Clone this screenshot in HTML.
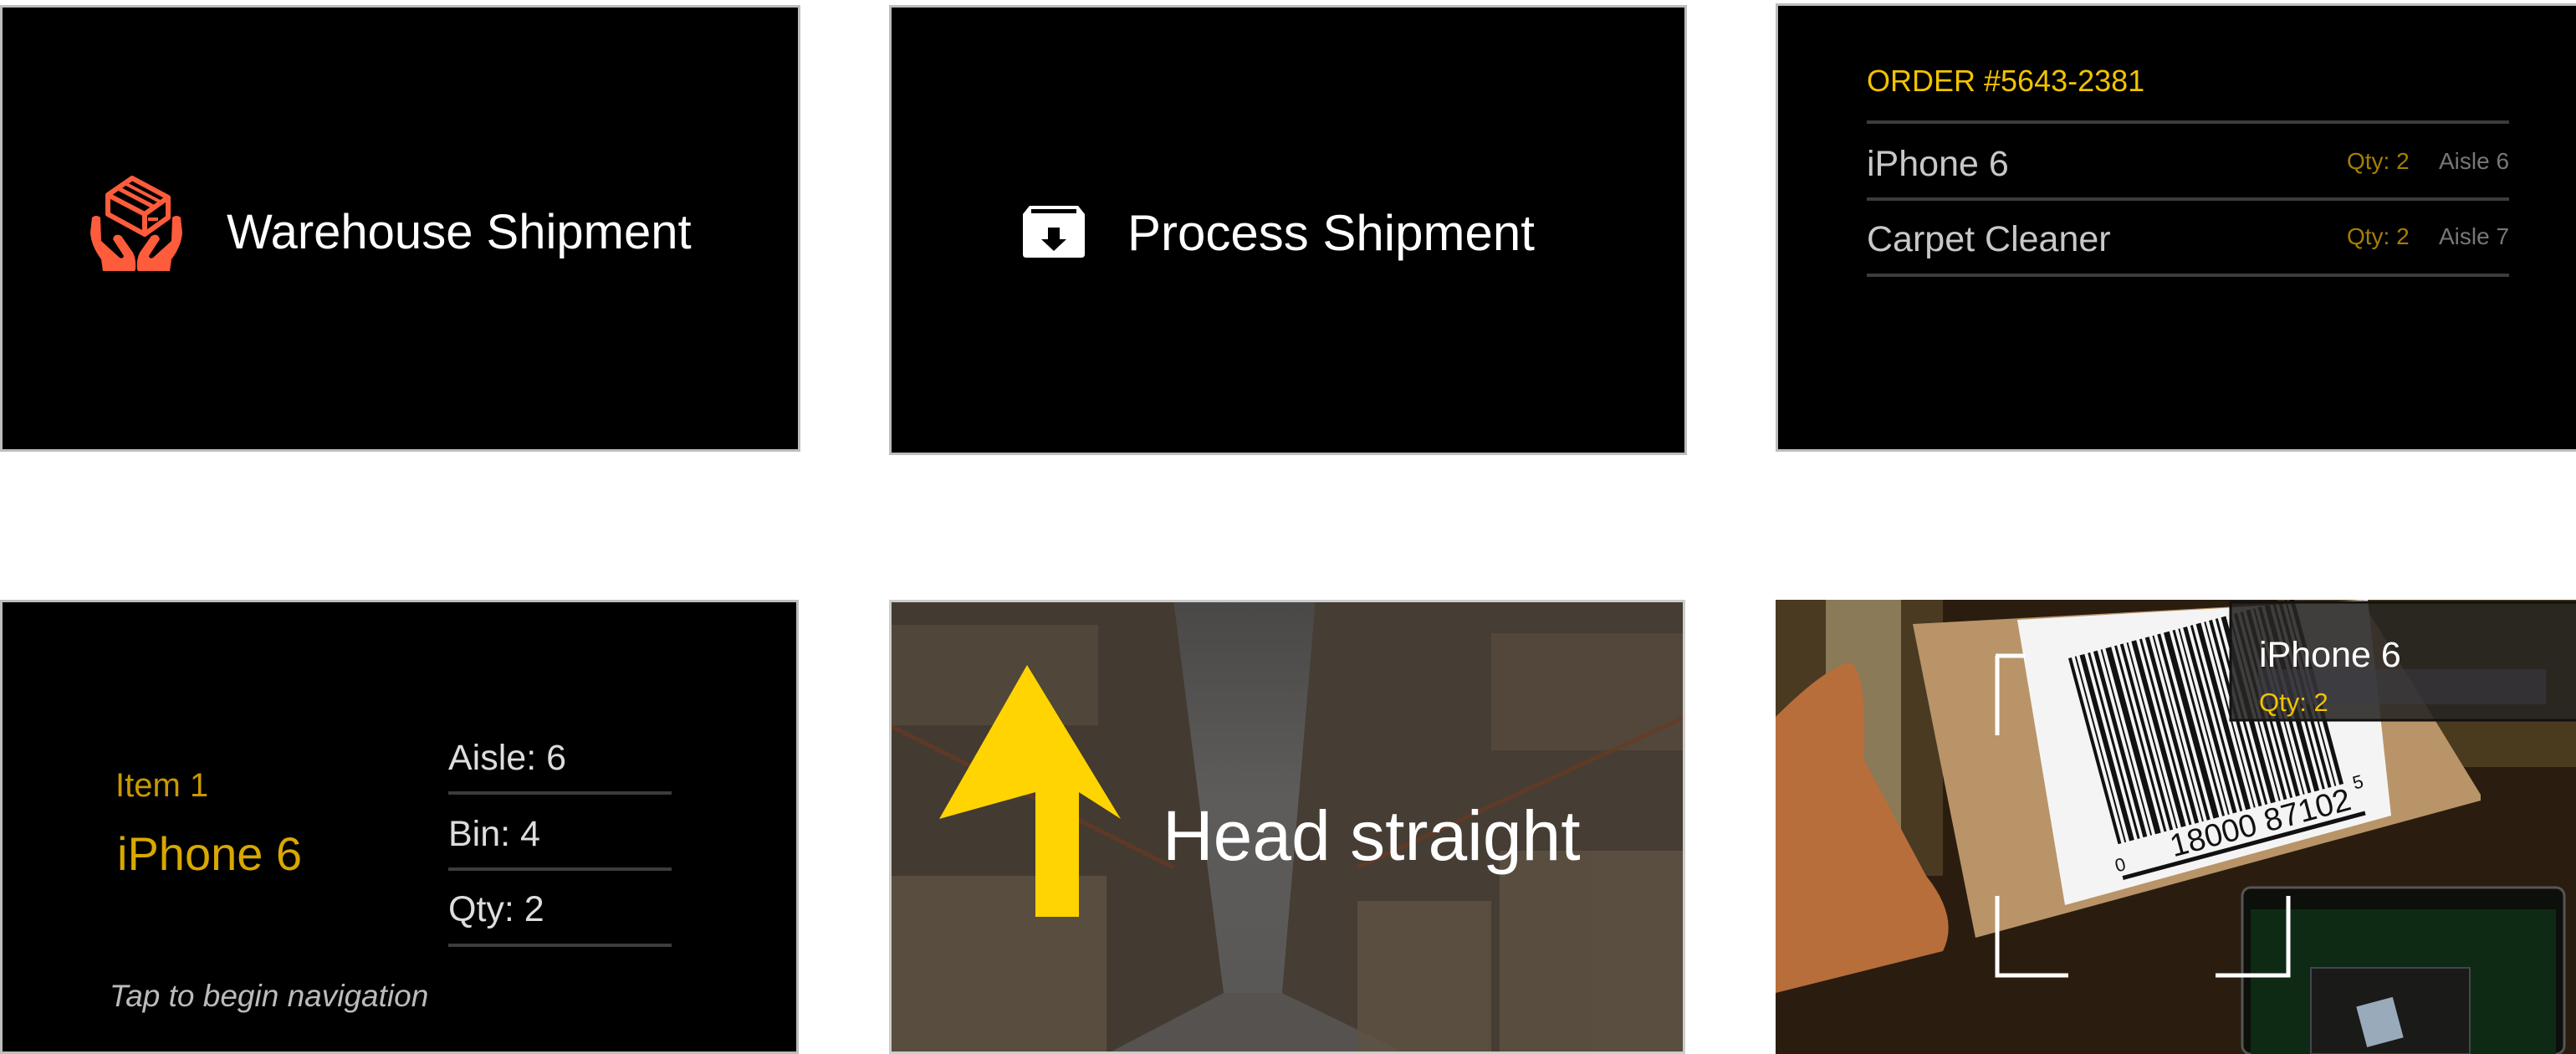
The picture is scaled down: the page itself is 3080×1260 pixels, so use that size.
<!DOCTYPE html>
<html><head><meta charset="utf-8"><style>
*{margin:0;padding:0;box-sizing:border-box}
body{width:3080px;height:1260px;background:#fff;position:relative;overflow:hidden;font-family:"Liberation Sans",sans-serif}
.p{position:absolute;background:#000;border:3px solid #bdbdbd;overflow:hidden}
.t{position:absolute;white-space:nowrap;line-height:1}
.ln{position:absolute;height:4px;background:#3c3c3c}
</style></head><body>

<!-- Panel 1 -->
<div class="p" style="left:0;top:6px;width:957px;height:534px">
<svg style="position:absolute;left:90px;top:189px" width="140" height="140" viewBox="0 0 140 140">
<g fill="none" stroke="#ff5c3c" stroke-width="6" stroke-linejoin="round">
<path d="M65 15 L108 38 L108 62 L80 82 L36 58 L36 35 Z"/>
<path d="M36 35 L80 58 L108 38"/><path d="M80 58 L80 82"/>
<path d="M50 28 L92 50" stroke-width="5"/><path d="M58 22 L100 44" stroke-width="4"/>
</g>
<rect x="84" y="62" width="12" height="4" fill="#ff5c3c"/>
<g fill="#ff5c3c">
<path d="M17 62 Q22 58 27 62 L28 90 L50 110 Q54 112 55 108 L42 88 Q44 80 52 84 L66 104 Q70 112 69 124 L68 126 L30 126 L28 112 Q16 96 15 80 Z"/>
<path d="M123 62 Q118 58 113 62 L112 90 L90 110 Q86 112 85 108 L98 88 Q96 80 88 84 L74 104 Q70 112 71 124 L72 126 L110 126 L112 112 Q124 96 125 80 Z"/>
</g>
</svg>
<div class="t" style="left:268px;top:240px;font-size:58px;color:#fff">Warehouse Shipment</div>
</div>

<!-- Panel 2 -->
<div class="p" style="left:1063px;top:6px;width:954px;height:538px">
<svg style="position:absolute;left:155px;top:233px" width="78" height="68" viewBox="0 0 78 68">
<path d="M10 4 H68 L76 14 V62 Q76 66 72 66 H6 Q2 66 2 62 V14 Z" fill="#fff"/>
<rect x="12" y="8" width="54" height="5" fill="#000"/>
<path d="M32 30 H46 V44 H54 L39 58 L24 44 H32 Z" fill="#000"/>
</svg>
<div class="t" style="left:282px;top:240px;font-size:60px;color:#fff">Process Shipment</div>
</div>

<!-- Panel 3 -->
<div class="p" style="left:2123px;top:4px;width:960px;height:536px">
<div class="t" style="left:106px;top:72px;font-size:36px;color:#f2c300">ORDER #5643-2381</div>
<div class="ln" style="left:106px;top:137px;width:768px"></div>
<div class="t" style="left:106px;top:168px;font-size:43px;color:#c8c8c8">iPhone 6</div>
<div class="t" style="left:680px;top:172px;font-size:28px;color:#a47f00">Qty: 2</div>
<div class="t" style="left:790px;top:172px;font-size:28px;color:#777">Aisle 6</div>
<div class="ln" style="left:106px;top:229px;width:768px"></div>
<div class="t" style="left:106px;top:258px;font-size:43px;color:#c8c8c8">Carpet Cleaner</div>
<div class="t" style="left:680px;top:262px;font-size:28px;color:#a47f00">Qty: 2</div>
<div class="t" style="left:790px;top:262px;font-size:28px;color:#777">Aisle 7</div>
<div class="ln" style="left:106px;top:320px;width:768px"></div>
</div>

<!-- Panel 4 -->
<div class="p" style="left:0;top:717px;width:955px;height:543px">
<div class="t" style="left:135px;top:199px;font-size:40px;color:#c99a00">Item 1</div>
<div class="t" style="left:137px;top:273px;font-size:56px;color:#d9a800">iPhone 6</div>
<div class="t" style="left:533px;top:165px;font-size:43px;color:#ddd">Aisle: 6</div>
<div class="ln" style="left:533px;top:226px;width:267px"></div>
<div class="t" style="left:533px;top:256px;font-size:43px;color:#ddd">Bin: 4</div>
<div class="ln" style="left:533px;top:317px;width:267px"></div>
<div class="t" style="left:533px;top:346px;font-size:43px;color:#ddd">Qty: 2</div>
<div class="ln" style="left:533px;top:408px;width:267px"></div>
<div class="t" style="left:128px;top:452px;font-size:37px;color:#bbb;font-style:italic">Tap to begin navigation</div>
</div>

<!-- Panel 5 -->
<div class="p" style="left:1063px;top:717px;width:952px;height:543px;border-color:#ccc">
<svg width="952" height="543" style="position:absolute;left:-3px;top:-3px">
<defs>
<linearGradient id="aisle" x1="0" y1="0" x2="0" y2="1"><stop offset="0" stop-color="#4a4846"/><stop offset=".5" stop-color="#5e5c5a"/><stop offset="1" stop-color="#5a5856"/></linearGradient>
</defs>
<rect width="952" height="543" fill="#3a332d"/>
<polygon points="0,0 340,0 400,470 260,543 0,543" fill="#433a32"/>
<polygon points="510,0 952,0 952,543 620,543 470,470" fill="#463d34"/>
<polygon points="340,0 510,0 470,470 400,470" fill="url(#aisle)"/>
<polygon points="400,470 470,470 620,543 260,543" fill="#55524f"/>
<g fill="#5e5242" opacity=".8">
<rect x="0" y="330" width="260" height="213"/><rect x="730" y="300" width="222" height="243"/>
<rect x="560" y="360" width="160" height="183"/></g>
<g fill="#5a4e40" opacity=".6"><rect x="0" y="30" width="250" height="120"/><rect x="720" y="40" width="232" height="140"/></g>
<g stroke="#6a3a22" stroke-width="5" opacity=".7"><line x1="0" y1="150" x2="340" y2="320"/><line x1="560" y1="320" x2="952" y2="140"/></g>
<polygon points="165,78 277,262 227,230 227,379 175,379 175,230 60,262" fill="#ffd400"/>
</svg>
<div class="t" style="left:324px;top:237px;font-size:84px;color:#fff">Head straight</div>
</div>

<!-- Panel 6 -->
<div class="p" style="left:2123px;top:717px;width:960px;height:543px;border:none">
<svg width="960" height="543" style="position:absolute;left:0;top:0">
<rect width="960" height="543" fill="#2a1d10"/>
<rect x="0" y="0" width="200" height="330" fill="#4a3a22"/>
<rect x="60" y="0" width="90" height="300" fill="#8a7a58"/>
<rect x="600" y="0" width="360" height="200" fill="#4a3a1e"/>
<polygon points="164,29 700,0 843,233 843,240 239,404" fill="#b99468"/>
<polygon points="289,24 708,0 736,258 346,365" fill="#f4f4f4"/>
<g transform="translate(350,70) rotate(-15)" fill="#111">
<rect x="0" y="0" width="4" height="230"/><rect x="8" y="0" width="2" height="230"/><rect x="14" y="0" width="6" height="230"/>
<rect x="24" y="0" width="3" height="230"/><rect x="31" y="0" width="5" height="230"/><rect x="40" y="0" width="2" height="230"/>
<rect x="46" y="0" width="7" height="230"/><rect x="57" y="0" width="3" height="230"/><rect x="64" y="0" width="4" height="230"/>
<rect x="72" y="0" width="2" height="230"/><rect x="78" y="0" width="6" height="230"/><rect x="88" y="0" width="3" height="230"/>
<rect x="95" y="0" width="5" height="230"/><rect x="104" y="0" width="2" height="230"/><rect x="110" y="0" width="4" height="230"/>
<rect x="118" y="0" width="7" height="230"/><rect x="129" y="0" width="3" height="230"/><rect x="136" y="0" width="2" height="230"/>
<rect x="142" y="0" width="5" height="230"/><rect x="151" y="0" width="3" height="230"/><rect x="158" y="0" width="6" height="230"/>
<rect x="168" y="0" width="2" height="230"/><rect x="174" y="0" width="4" height="230"/><rect x="182" y="0" width="3" height="230"/>
<rect x="189" y="0" width="6" height="230"/><rect x="199" y="0" width="2" height="230"/><rect x="205" y="0" width="4" height="230"/>
<rect x="213" y="0" width="3" height="230"/><rect x="220" y="0" width="5" height="230"/><rect x="229" y="0" width="2" height="230"/>
<rect x="235" y="0" width="4" height="230"/><rect x="243" y="0" width="6" height="230"/><rect x="253" y="0" width="3" height="230"/>
<rect x="260" y="0" width="4" height="230"/><rect x="268" y="0" width="2" height="230"/><rect x="274" y="0" width="5" height="230"/>
<rect x="-5" y="268" width="300" height="5"/>
<text x="60" y="262" font-size="38" font-family="Liberation Sans">18000 87102</text>
<text x="-10" y="262" font-size="22" font-family="Liberation Sans">0</text>
<text x="290" y="240" font-size="22" font-family="Liberation Sans">5</text>
</g>
<path d="M0 140 Q60 80 90 75 Q110 90 105 190 L180 330 Q220 380 200 420 L120 440 L0 470 Z" fill="#b86e3a"/>
<rect x="558" y="344" width="385" height="199" rx="10" fill="#0c0f0a" stroke="#555" stroke-width="3"/>
<rect x="568" y="370" width="365" height="173" fill="#0e2a14"/>
<rect x="640" y="440" width="190" height="103" fill="#1a1a18" stroke="#445" stroke-width="2"/>
<rect x="700" y="480" width="45" height="50" fill="#9ab" transform="rotate(-15 722 505)"/>
<g fill="none" stroke="#fff" stroke-width="5">
<path d="M265 67 V162 M263 67 H299"/>
<path d="M265 354 V449 H350"/>
<path d="M613 354 V449 H526"/>
</g>
<rect x="544" y="3" width="416" height="141" fill="rgba(38,36,34,.88)"/>
<rect x="544" y="3" width="416" height="141" fill="none" stroke="#111" stroke-width="3"/>
<rect x="577" y="83" width="344" height="42" fill="rgba(60,60,70,.5)"/>
</svg>
<div class="t" style="left:578px;top:45px;font-size:43px;color:#fff">iPhone 6</div>
<div class="t" style="left:578px;top:107px;font-size:31px;color:#f2c300">Qty: 2</div>
</div>
</body></html>
